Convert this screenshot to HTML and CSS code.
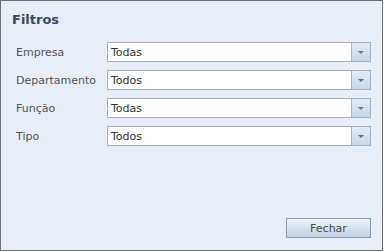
FILE: index.html
```html
<!DOCTYPE html>
<html lang="pt">
<head>
    <meta charset="UTF-8">
    <title>Filtros</title>
    <link rel="stylesheet" href="styles.css">
</head>
<body>

<div class="panel">
    <h1>Filtros</h1>
    <div class="filters">
        <div class="row">
            <label>Empresa</label>
            <div class="combo"><span>Todas</span><div class="arrow"></div></div>
        </div>
        <div class="row">
            <label>Departamento</label>
            <div class="combo"><span>Todos</span><div class="arrow"></div></div>
        </div>
        <div class="row">
            <label>Função</label>
            <div class="combo"><span>Todas</span><div class="arrow"></div></div>
        </div>
        <div class="row">
            <label>Tipo</label>
            <div class="combo"><span>Todos</span><div class="arrow"></div></div>
        </div>
    </div>
    <div class="footer">
        <button class="close-btn">Fechar</button>
    </div>
</div>

</body>
</html>
```

FILE: styles.css
```css
body {
    margin: 0;
    font-family: "DejaVu Sans", Verdana, sans-serif;
}
.panel {
    box-sizing: border-box;
    width: 383px;
    height: 251px;
    border: 1px solid #6f6f6f;
    background: #e8eef7;
    display: flex;
    flex-direction: column;
    padding: 0 11px 0 15px;
}
h1 {
    margin: 11px 0 0 -4px;
    font-size: 13px;
    font-weight: bold;
    color: #3c4a5c;
    height: 30px;
}
.filters {
    display: flex;
    flex-direction: column;
    gap: 8px;
}
.row {
    display: flex;
    align-items: center;
    height: 20px;
}
.row label {
    width: 91px;
    font-size: 11px;
    color: #555;
}
.combo {
    flex: 1;
    height: 20px;
    box-sizing: border-box;
    border: 1px solid #a3b3c6;
    background: #fff;
    display: flex;
    align-items: center;
}
.combo span {
    flex: 1;
    padding-left: 3px;
    font-size: 11px;
    color: #333;
}
.arrow {
    width: 18px;
    height: 18px;
    border-left: 1px solid #a3b3c6;
    background: linear-gradient(#e2eaf4, #c9d7e8);
    display: flex;
    align-items: center;
    justify-content: center;
}
.arrow::after {
    content: "";
    border-left: 3px solid transparent;
    border-right: 3px solid transparent;
    border-top: 3px solid #6b7580;
}
.footer {
    margin-top: auto;
    display: flex;
    justify-content: flex-end;
    padding-bottom: 12px;
}
.close-btn {
    width: 85px;
    height: 20px;
    border: 1px solid #8c9aab;
    background: linear-gradient(#eef3f9, #d7e2ee 50%, #c4d3e4);
    font-family: "DejaVu Sans", Verdana, sans-serif;
    font-size: 11px;
    color: #4a4a4a;
    padding: 0;
}
```
